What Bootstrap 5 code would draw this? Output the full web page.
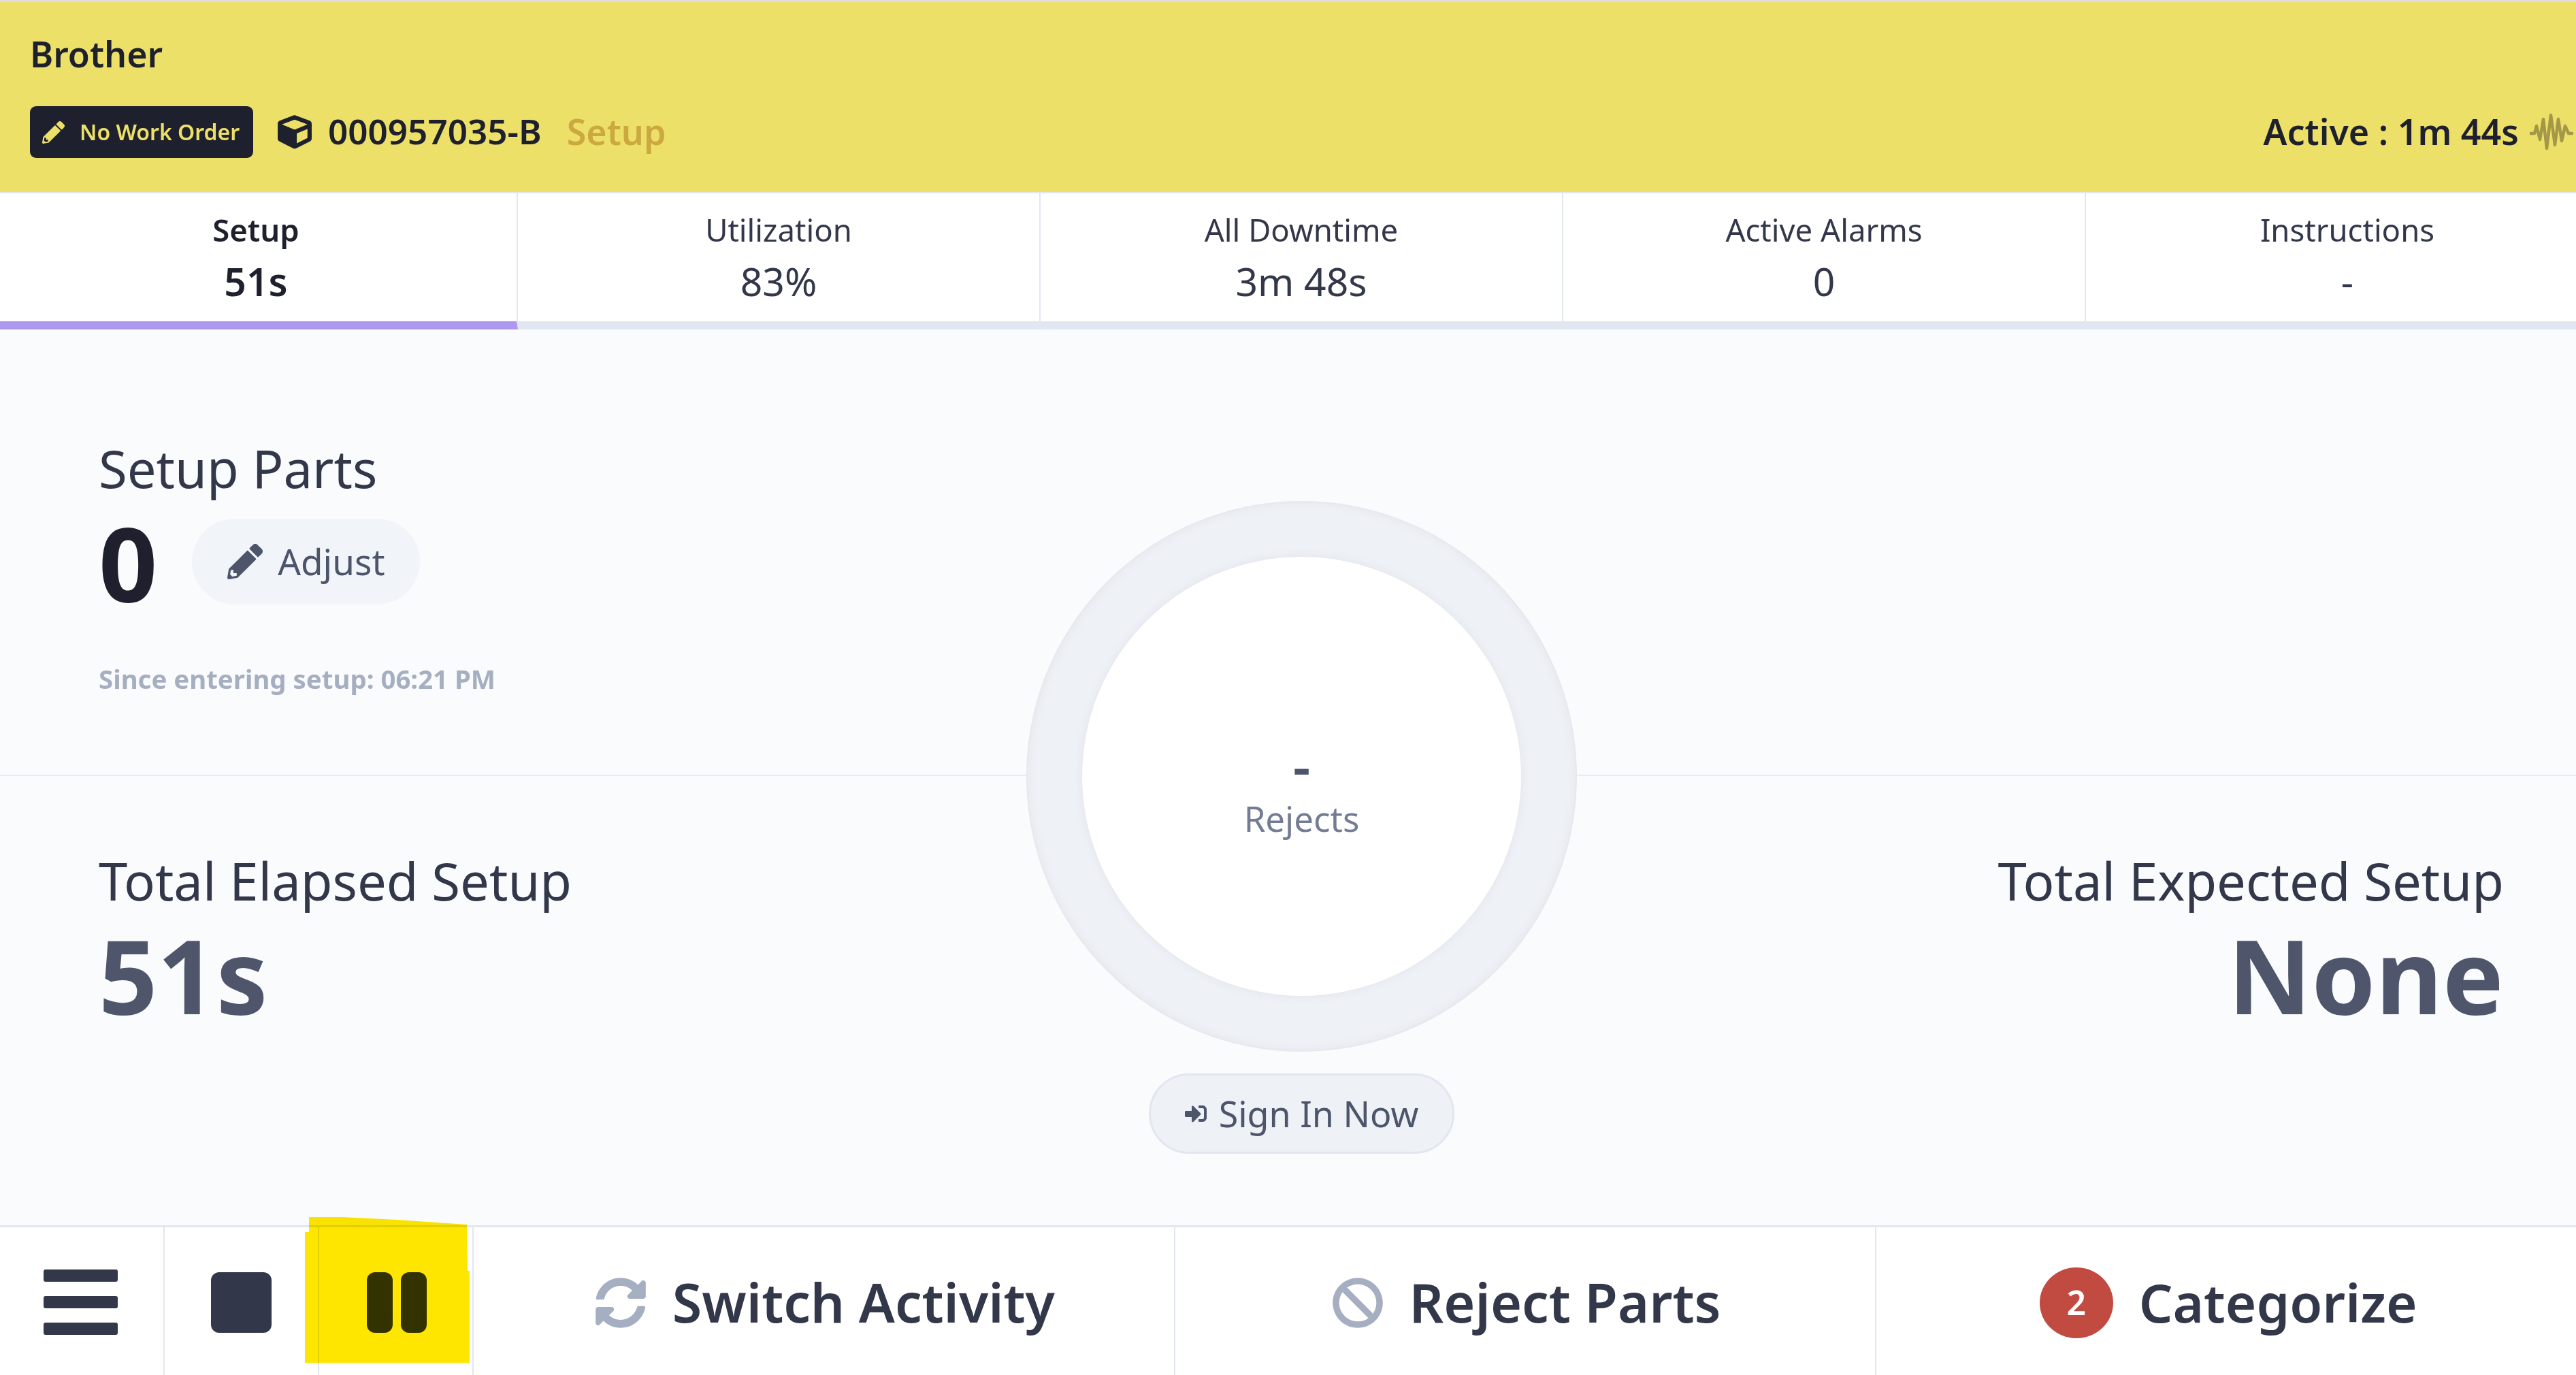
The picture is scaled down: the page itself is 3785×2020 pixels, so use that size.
<!DOCTYPE html>
<html lang="en">
<head>
<meta charset="UTF-8" />
<title>Brother</title>
<link rel="stylesheet" href="https://cdn.jsdelivr.net/npm/bootstrap@5.3.6/dist/css/bootstrap.min.css" />
<script src="https://cdn.jsdelivr.net/npm/bootstrap@5.3.6/dist/js/bootstrap.bundle.min.js"></script>
<style>
  html, body { height: 100%; }
  body { font-family: "Noto Sans", sans-serif; background: #fafbfd; color: #323849; overflow: hidden; }
  .screen { height: 2020px; position: relative; }
  .head-bar { height: 284px; background: #ece069; border-top: 3px solid #dcdde2; border-bottom: 2px solid #e2e6f0; padding: 0 4px 0 44px; color: #1e202e; }
  .machine-name { font-size: 52px; font-weight: 600; line-height: 68px; padding-top: 42px; }
  .head-row { margin-top: 43px; height: 76px; }
  .wo-tag { height: 76px; width: 328px; background: #1e202e; color: #ece069; border-radius: 9px; font-size: 32px; font-weight: 600; padding-left: 18px; gap: 22px; }
  .cube-icon { margin-left: 36px; margin-right: 24px; }
  .part-no { font-size: 51.2px; font-weight: 600; line-height: 1; margin-top: -2px; }
  .active-time { font-size: 52px; font-weight: 600; line-height: 1; margin-top: -2px; }
  .state-name { font-size: 52px; font-weight: 600; color: #cca940; line-height: 1; margin-left: 37px; margin-top: -2px; }
  .tab-strip { margin-left: -7px; width: 3840px; height: 200px; display: grid; grid-template-columns: repeat(5, 1fr); }
  .tab-cell { background: #fff; border-bottom: 12px solid #e2e6f0; border-right: 2px solid #e2e6f0; text-align: center; padding-top: 23px; }
  .tab-cell:last-child { border-right: 0; }
  .tab-cell.is-on { border-bottom-color: #ae97ee; font-weight: 600; color: #1e202e; }
  .tab-label { font-size: 45.5px; line-height: 60px; }
  .tab-value { font-size: 57px; line-height: 74px; margin-top: 9px; }
  .main-area { height: 1316px; position: relative; padding: 0 106px 0 145px; }
  .upper-part { height: 656px; padding-top: 151px; border-bottom: 2px solid #e8ebf3; margin: 0 -106px 0 -145px; padding-left: 145px; }
  .big-title { font-size: 76px; line-height: 106px; }
  .big-num { font-size: 151px; font-weight: 700; line-height: 155px; }
  .count-row { height: 126px; margin-top: 21px; gap: 51px; color: #1e202e; }
  .adjust-btn { height: 126px; width: 335px; background: #f1f4f8; color: #4d556b; font-size: 53px; border: 0; border-radius: 63px; gap: 22px; }
  .since-text { font-size: 38.4px; font-weight: 700; color: #a6afc1; margin-top: 82px; line-height: 54px; }
  .lower-part { padding-top: 101px; color: #4f566b; }
  .lower-part .big-title { color: #323849; margin-bottom: 7px; }
  .ring-wrap { position: absolute; left: 1508px; top: 252px; width: 809px; }
  .ring-shape { width: 809px; height: 809px; border-radius: 50%; background: #eef1f6; border: 2px solid #e6e8ee; padding: 80px; box-shadow: inset 0 0 14px #e3e5ec; }
  .ring-inner { width: 100%; height: 100%; border-radius: 50%; background: #fff; box-shadow: 0 0 14px #e0e3ea; text-align: center; padding-top: 276px; }
  .ring-dash { font-size: 80px; font-weight: 600; line-height: 60px; color: #4d556b; }
  .ring-label { font-size: 51px; line-height: 66px; color: #747c94; margin-top: 15px; }
  .signin-btn { height: 118px; width: 449px; margin: 32px auto 0; background: #eef1f6; border: 3px solid #e2e6f0; border-radius: 59px; font-size: 52px; color: #4d556b; gap: 18px; }
  .foot-bar { height: 220px; width: 3787px; background: #fff; border-top: 3px solid #e2e6f0; color: #323849; }
  .foot-cell { border-right: 2px solid #e2e6f0; padding-top: 4px; }
  .foot-menu { width: 242px; flex: none; padding-right: 4px; }
  .foot-small { width: 227px; flex: none; }
  .foot-pause { gap: 12px; padding-left: 3px; }
  .foot-wide { flex: 1 1 0; font-size: 79px; font-weight: 600; gap: 38px; padding-left: 3px; }
  .foot-wide:last-child { border-right: 0; font-size: 78px; padding-left: 4px; }
  .menu-bars { width: 109px; height: 97px; }
  .menu-bars span { display: block; height: 18px; background: #323849; border-radius: 3px; margin-bottom: 21px; }
  .stop-sq { width: 89px; height: 89px; background: #323849; border-radius: 12px; }
  .pause-bar { width: 38px; height: 89px; background: #323849; border-radius: 12px; }
  .count-dot { width: 108px; height: 104px; border-radius: 50%; background: #c14a41; color: #fff; font-size: 50px; font-weight: 600; }
  .marker-shape { position: absolute; left: 448px; top: 1788px; width: 242px; height: 214px; mix-blend-mode: multiply; }
</style>
</head>
<body>
<div class="screen d-flex flex-column">
  <header class="head-bar">
    <div class="machine-name">Brother</div>
    <div class="head-row d-flex align-items-center">
      <span class="wo-tag d-flex align-items-center">
        <svg width="33" height="33" viewBox="0 0 512 512" fill="#ece069"><path d="M497.9 142.1l-46.1 46.1c-4.7 4.7-12.3 4.7-17 0l-111-111c-4.7-4.7-4.7-12.3 0-17l46.1-46.1c18.7-18.7 49.1-18.7 67.9 0l60.1 60.1c18.8 18.7 18.8 49.1 0 67.9zM284.2 99.8L21.6 362.4.4 483.9c-2.9 16.4 11.4 30.6 27.8 27.8l121.5-21.3 262.6-262.6c4.7-4.7 4.7-12.3 0-17l-111-111c-4.8-4.7-12.4-4.7-17.1 0zM88 424h48v36.3l-64.5 11.3-31.1-31.1L51.7 376H88v48z"/></svg>
        No Work Order
      </span>
      <svg class="cube-icon" width="50" height="50" viewBox="0 0 512 512" fill="#1e202e"><path d="M239.1 6.3l-208 78c-18.7 7-31.1 25-31.1 45v225.1c0 18.2 10.3 34.8 26.5 42.9l208 104c13.5 6.8 29.4 6.8 42.9 0l208-104c16.3-8.1 26.5-24.8 26.5-42.9V129.3c0-20-12.4-37.9-31.1-44.9l-208-78C262 2.2 250 2.2 239.1 6.3zM256 68.4l192 72v1.1l-192 78-192-78v-1.1l192-72zm32 356V275.5l160-65v133.9l-160 80z"/></svg>
      <span class="part-no">000957035-B</span>
      <span class="state-name">Setup</span>
      <span class="active-time ms-auto">Active : 1m 44s</span>
      <svg class="ms-3" width="64" height="54" viewBox="0 0 64 54" fill="none" stroke="#a39848" stroke-width="4.500" stroke-linejoin="round" stroke-linecap="round"><path d="M1 29h6l3-11 5 20 5-30 5 43 6-49 6 44 5-38 5 32 5-22 5 11h6"/></svg>
    </div>
  </header>

  <div class="tab-strip">
    <div class="tab-cell is-on"><div class="tab-label">Setup</div><div class="tab-value">51s</div></div>
    <div class="tab-cell"><div class="tab-label">Utilization</div><div class="tab-value">83%</div></div>
    <div class="tab-cell"><div class="tab-label">All Downtime</div><div class="tab-value">3m 48s</div></div>
    <div class="tab-cell"><div class="tab-label">Active Alarms</div><div class="tab-value">0</div></div>
    <div class="tab-cell"><div class="tab-label">Instructions</div><div class="tab-value">-</div></div>
  </div>

  <main class="main-area">
    <section class="upper-part">
      <div class="big-title">Setup Parts</div>
      <div class="count-row d-flex align-items-center">
        <span class="big-num">0</span>
        <button class="adjust-btn d-flex align-items-center justify-content-center" type="button">
          <svg width="52" height="52" viewBox="0 0 512 512" fill="#4d556b"><path d="M497.9 142.1l-46.1 46.1c-4.7 4.7-12.3 4.7-17 0l-111-111c-4.7-4.7-4.7-12.3 0-17l46.1-46.1c18.7-18.7 49.1-18.7 67.9 0l60.1 60.1c18.8 18.7 18.8 49.1 0 67.9zM284.2 99.8L21.6 362.4.4 483.9c-2.9 16.4 11.4 30.6 27.8 27.8l121.5-21.3 262.6-262.6c4.7-4.7 4.7-12.3 0-17l-111-111c-4.8-4.7-12.4-4.7-17.1 0zM88 424h48v36.3l-64.5 11.3-31.1-31.1L51.7 376H88v48z"/></svg>
          Adjust
        </button>
      </div>
      <div class="since-text">Since entering setup: 06:21 PM</div>
    </section>
    <section class="lower-part d-flex justify-content-between">
      <div>
        <div class="big-title">Total Elapsed Setup</div>
        <div class="big-num">51s</div>
      </div>
      <div class="text-end">
        <div class="big-title">Total Expected Setup</div>
        <div class="big-num">None</div>
      </div>
    </section>
    <div class="ring-wrap">
      <div class="ring-shape">
        <div class="ring-inner">
          <div class="ring-dash">-</div>
          <div class="ring-label">Rejects</div>
        </div>
      </div>
      <button class="signin-btn d-flex align-items-center justify-content-center" type="button">
        <svg width="32" height="32" viewBox="0 0 512 512" fill="#4d556b"><path d="M416 448h-84c-6.600 0-12-5.400-12-12v-40c0-6.600 5.400-12 12-12h84c17.700 0 32-14.300 32-32V160c0-17.700-14.300-32-32-32h-84c-6.600 0-12-5.400-12-12V76c0-6.600 5.400-12 12-12h84c53 0 96 43 96 96v192c0 53-43 96-96 96zm-47-201L201 79c-15-15-41-4.500-41 17v96H24c-13.300 0-24 10.700-24 24v96c0 13.300 10.700 24 24 24h136v96c0 21.500 26 32 41 17l168-168c9.300-9.400 9.300-24.600 0-34z"/></svg>
        Sign In Now
      </button>
    </div>
  </main>

  <footer class="foot-bar d-flex">
    <div class="foot-cell foot-menu d-flex align-items-center justify-content-center">
      <div class="menu-bars"><span></span><span></span><span></span></div>
    </div>
    <div class="foot-cell foot-small d-flex align-items-center justify-content-center"><div class="stop-sq"></div></div>
    <div class="foot-cell foot-small foot-pause d-flex align-items-center justify-content-center"><div class="pause-bar"></div><div class="pause-bar"></div></div>
    <div class="foot-cell foot-wide d-flex align-items-center justify-content-center">
      <svg width="76" height="76" viewBox="0 0 512 512" fill="#a6afc1"><path d="M370.72 133.28C339.458 104.008 298.888 87.962 255.848 88c-77.458.068-144.328 53.178-162.791 126.85-1.344 5.363-6.122 9.15-11.651 9.15H24.103c-7.498 0-13.194-6.807-11.807-14.176C33.933 94.924 134.813 8 256 8c66.448 0 126.791 26.136 171.315 68.685L463.03 40.97C478.149 25.851 504 36.559 504 57.941V192c0 13.255-10.745 24-24 24H345.941c-21.382 0-32.09-25.851-16.971-40.971l41.75-41.749zM32 296h134.059c21.382 0 32.09 25.851 16.971 40.971l-41.75 41.75c31.262 29.273 71.835 45.319 114.876 45.28 77.418-.07 144.315-53.144 162.787-126.849 1.344-5.363 6.122-9.15 11.651-9.15h57.304c7.498 0 13.194 6.807 11.807 14.176C478.067 417.076 377.187 504 256 504c-66.448 0-126.791-26.136-171.315-68.685L48.97 471.03C33.851 486.149 8 475.441 8 454.059V320c0-13.255 10.745-24 24-24z"/></svg>
      Switch Activity
    </div>
    <div class="foot-cell foot-wide d-flex align-items-center justify-content-center">
      <svg width="76" height="76" viewBox="0 0 512 512" fill="#a6afc1"><path d="M256 8C119.034 8 8 119.033 8 256s111.034 248 248 248 248-111.034 248-248S392.967 8 256 8zm130.108 117.892c65.448 65.448 70 165.481 20.677 235.637L150.47 105.216c70.204-49.356 170.226-44.735 235.638 20.676zM125.892 386.108c-65.448-65.448-70-165.481-20.677-235.637L361.53 406.784c-70.203 49.356-170.226 44.736-235.638-20.676z"/></svg>
      Reject Parts
    </div>
    <div class="foot-cell foot-wide d-flex align-items-center justify-content-center">
      <span class="count-dot d-flex align-items-center justify-content-center">2</span>
      Categorize
    </div>
  </footer>

  <svg class="marker-shape" viewBox="0 0 242 214" fill="#ffe600"><path d="M0 22H6V0H56L136 4 238 11 239 79H242V214H0Z"/></svg>
</div>
</body>
</html>
